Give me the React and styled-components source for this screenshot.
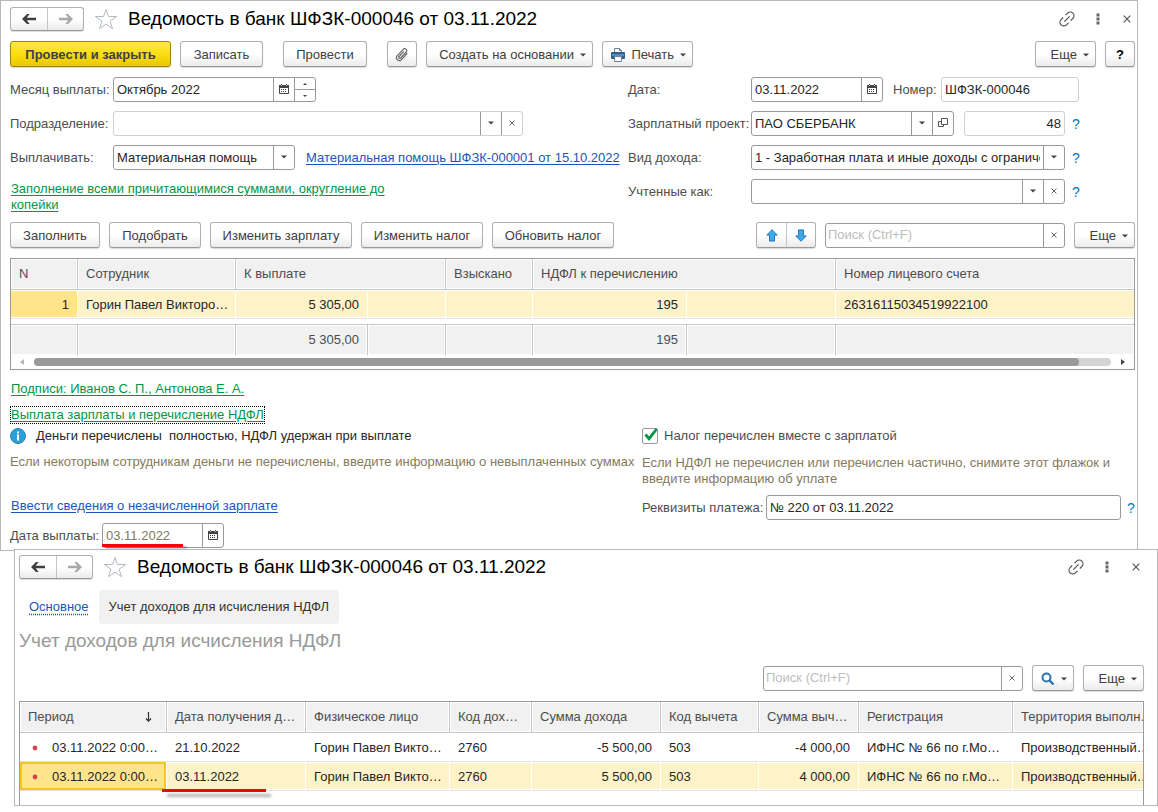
import React, { useState } from "react";
import styled, { createGlobalStyle, css } from "styled-components";

/* ---------- icons ---------- */

const Caret = () => (
  <svg width="6" height="4" viewBox="0 0 6 4" aria-hidden="true">
    <path d="M0 0.5h6L3 3.5z" fill="#444" />
  </svg>
);

const SpinMark = ({ up }) => (
  <svg width="4" height="2" viewBox="0 0 4 2" aria-hidden="true">
    <path d={up ? "M0 2h4L2 0z" : "M0 0h4L2 2z"} fill="#444" />
  </svg>
);

const ArrowIcon = ({ right }) => (
  <svg width="14" height="10" viewBox="0 0 14 10" aria-hidden="true">
    <path
      d="M0 5L5 0h2.6L4.8 3.7H14v2.6H4.8L7.6 10H5z"
      transform={right ? "rotate(180 7 5)" : undefined}
      fill={right ? "#a8a8a8" : "#404040"}
    />
  </svg>
);

const StarIcon = () => (
  <svg width="24" height="22" viewBox="0 0 24 22" aria-hidden="true">
    <path
      d="M12 1.5l2.5 7h8.2l-6.6 4.7 2.4 7.4L12 16.2l-6.5 4.4 2.4-7.4L1.3 8.5h8.2z"
      fill="#fff"
      stroke="#b4bac2"
      strokeWidth="1"
    />
  </svg>
);

const LinkIcon = () => (
  <svg width="20" height="20" viewBox="0 0 24 24" aria-hidden="true">
    <g
      transform="rotate(-45 12 12)"
      fill="none"
      stroke="#555"
      strokeWidth="1.5"
    >
      <path d="M10 16.5H6.5a4.5 4.5 0 0 1 0-9H10" />
      <path d="M14 7.5h3.5a4.5 4.5 0 0 1 0 9H14" />
      <path d="M7.5 12h9" />
    </g>
  </svg>
);

const DotsIcon = () => (
  <svg width="4" height="12" viewBox="0 0 4 12" aria-hidden="true">
    <path d="M0.5 0.5h3v3h-3zM0.5 4.5h3v3h-3zM0.5 8.5h3v3h-3z" fill="#666" />
  </svg>
);

const CrossIcon = ({ size = 8 }) => (
  <svg width={size} height={size} viewBox="0 0 8 8" aria-hidden="true">
    <path d="M0.7 0.7l6.6 6.6M7.3 0.7L0.7 7.3" stroke="#555" strokeWidth="1.2" />
  </svg>
);

const CalendarIcon = () => (
  <svg width="10" height="10" viewBox="0 0 10 10" aria-hidden="true">
    <path d="M0.5 1.5h9v8h-9z" fill="#fff" stroke="#444" />
    <path d="M0 1h10v3H0zM2 0h1v2H2zM7 0h1v2H7z" fill="#444" />
    <path d="M2 1h1v1H2zM7 1h1v1H7z" fill="#ccc" />
    <path
      d="M2 5h1v1H2zM4 5h1v1H4zM6 5h1v1H6zM2 7h1v1H2zM4 7h1v1H4zM6 7h1v1H6z"
      fill="#444"
    />
  </svg>
);

const OpenIcon = () => (
  <svg width="10" height="10" viewBox="0 0 10 10" aria-hidden="true">
    <path d="M3.5 0.5h6v6h-6z" fill="none" stroke="#555" />
    <path d="M3 3.5H0.5v5h5V7" fill="none" stroke="#555" />
  </svg>
);

const ClipIcon = () => (
  <svg width="14" height="16" viewBox="0 0 14 16" aria-hidden="true">
    <path
      d="M12.4 6.2L6.6 12.6a2.9 2.9 0 0 1-4.3-3.9L8.2 2.3a2 2 0 0 1 3 2.7L5.8 11a1.1 1.1 0 0 1-1.7-1.5l4.7-5.2"
      fill="none"
      stroke="#666"
      strokeWidth="1.2"
    />
  </svg>
);

const PrinterIcon = () => (
  <svg width="14" height="14" viewBox="0 0 14 14" aria-hidden="true">
    <path d="M3.5 5V0.5h5l2 2V5" fill="#fff" stroke="#6b8096" />
    <path d="M8.5 0.5v2h2" fill="none" stroke="#6b8096" />
    <rect y="4" width="14" height="7" rx="1" fill="#2c5f8f" />
    <path d="M1 7h12" stroke="#8fb3d1" />
    <path d="M3.5 8.5h7v5h-7z" fill="#fff" stroke="#6b8096" />
  </svg>
);

const MoveIcon = ({ down }) => (
  <svg width="12" height="13" viewBox="0 0 12 13" aria-hidden="true">
    <path
      d="M6 0.7l5.2 5.4H8.5v6h-5v-6H0.8z"
      transform={down ? "rotate(180 6 6.5)" : undefined}
      fill="#3fa9f0"
      stroke="#2479b5"
    />
  </svg>
);

const SearchIcon = () => (
  <svg width="14" height="14" viewBox="0 0 14 14" aria-hidden="true">
    <circle cx="5.5" cy="5.5" r="4" fill="none" stroke="#2a72b0" strokeWidth="2" />
    <path d="M8.5 8.5l4 4" stroke="#2a72b0" strokeWidth="2.4" />
  </svg>
);

const InfoIcon = () => (
  <svg width="16" height="16" viewBox="0 0 16 16" aria-hidden="true">
    <circle cx="8" cy="8" r="7.5" fill="#2d9fd2" stroke="#2287b8" />
    <path d="M7 3.5h2v2H7zM7 6.5h2v6H7z" fill="#fff" />
  </svg>
);

const SortIcon = () => (
  <svg width="7" height="10" viewBox="0 0 7 10" aria-hidden="true">
    <path d="M3.5 0v9M1 6.5l2.5 2.7L6 6.5" fill="none" stroke="#333" strokeWidth="1.2" />
  </svg>
);

const RecordMark = () => (
  <svg width="6" height="6" viewBox="0 0 6 6" aria-hidden="true">
    <circle cx="3" cy="3" r="2.4" fill="#d9434a" />
  </svg>
);

const ScrollMark = ({ right }) => (
  <svg width="4" height="6" viewBox="0 0 4 6" aria-hidden="true">
    <path d={right ? "M0 0v6l4-3z" : "M4 0v6L0 3z"} fill={right ? "#444" : "#b5b5b5"} />
  </svg>
);

/* ---------- shared parts ---------- */

function WindowHeader() {
  return (
    <Header>
      <ButtonGroup $height={24}>
        <GroupButton $width={36} aria-label="Назад">
          <ArrowIcon />
        </GroupButton>
        <GroupButton $width={36} aria-label="Вперед">
          <ArrowIcon right />
        </GroupButton>
      </ButtonGroup>
      <IconButton $width={24} aria-label="В избранное">
        <StarIcon />
      </IconButton>
      <Title>Ведомость в банк ШФЗК-000046 от 03.11.2022</Title>
      <WindowTools>
        <IconButton $width={20} aria-label="Ссылка">
          <LinkIcon />
        </IconButton>
        <IconButton $width={16} aria-label="Меню">
          <DotsIcon />
        </IconButton>
        <IconButton $width={16} aria-label="Закрыть">
          <CrossIcon />
        </IconButton>
      </WindowTools>
    </Header>
  );
}

function Combo({ id, value, width, soft, children }) {
  return (
    <Box $width={width} $soft={soft}>
      <Select id={id} defaultValue={value}>
        <option>{value}</option>
      </Select>
      <Addon tabIndex={-1} aria-label="Выбрать">
        <Caret />
      </Addon>
      {children}
    </Box>
  );
}

function SearchBox({ width, label }) {
  return (
    <Box $width={width}>
      <Input type="text" placeholder="Поиск (Ctrl+F)" aria-label={label} $search />
      <Addon aria-label="Очистить">
        <CrossIcon size={6} />
      </Addon>
    </Box>
  );
}

const MoreButton = () => (
  <Button $width={61} $menu>
    Еще <Caret />
  </Button>
);

/* ---------- document window ---------- */

function PayoutForm() {
  return (
    <FormGrid>
      <FormColumn>
        <Row>
          <Label htmlFor="month" $width={103}>Месяц выплаты:</Label>
          <Box $width={203}>
            <Input id="month" defaultValue="Октябрь 2022" />
            <Addon aria-label="Календарь"><CalendarIcon /></Addon>
            <Spinner>
              <button aria-label="Больше"><SpinMark up /></button>
              <button aria-label="Меньше"><SpinMark /></button>
            </Spinner>
          </Box>
        </Row>
        <Row>
          <Label htmlFor="department" $width={103}>Подразделение:</Label>
          <Combo id="department" value="" width={410} soft>
            <Addon aria-label="Очистить"><CrossIcon size={6} /></Addon>
          </Combo>
        </Row>
        <Row>
          <Label htmlFor="payKind" $width={103}>Выплачивать:</Label>
          <Combo id="payKind" value="Материальная помощь" width={182} />
          <DocLink href="#aid">Материальная помощь ШФЗК-000001 от 15.10.2022</DocLink>
        </Row>
        <FillLink href="#fill">
          Заполнение всеми причитающимися суммами, округление до копейки
        </FillLink>
      </FormColumn>
      <FormColumn>
        <Row>
          <Label htmlFor="date" $width={123}>Дата:</Label>
          <Box $width={132}>
            <Input id="date" defaultValue="03.11.2022" />
            <Addon aria-label="Календарь"><CalendarIcon /></Addon>
          </Box>
          <NumberLabel htmlFor="number">Номер:</NumberLabel>
          <Box $width={138} $soft>
            <Input id="number" defaultValue="ШФЗК-000046" />
          </Box>
        </Row>
        <Row>
          <Label htmlFor="project" $width={123}>Зарплатный проект:</Label>
          <Combo id="project" value="ПАО СБЕРБАНК" width={203}>
            <Addon aria-label="Открыть"><OpenIcon /></Addon>
          </Combo>
          <CodeBox $width={101} $soft>
            <Input aria-label="Номер проекта" defaultValue="48" $right />
          </CodeBox>
          <Help href="#help">?</Help>
        </Row>
        <Row>
          <Label htmlFor="income" $width={123}>Вид дохода:</Label>
          <Combo
            id="income"
            value="1 - Заработная плата и иные доходы с ограничением взыскания"
            width={314}
          />
          <Help href="#help">?</Help>
        </Row>
        <Row>
          <Label htmlFor="accounted" $width={123}>Учтенные как:</Label>
          <Combo id="accounted" value="" width={314}>
            <Addon aria-label="Очистить"><CrossIcon size={6} /></Addon>
          </Combo>
          <Help href="#help">?</Help>
        </Row>
      </FormColumn>
    </FormGrid>
  );
}

const PAYOUT_COLS = [67, 158, 132, 78, 87, 154, 149];

function PayoutTable() {
  return (
    <TableFrame>
      <Table>
        <colgroup>
          {PAYOUT_COLS.map((w, i) => (
            <Col key={i} $width={w} />
          ))}
          <col />
        </colgroup>
        <thead>
          <tr>
            <Th>N</Th>
            <Th>Сотрудник</Th>
            <Th colSpan={2}>К выплате</Th>
            <Th>Взыскано</Th>
            <Th colSpan={2}>НДФЛ к перечислению</Th>
            <Th>Номер лицевого счета</Th>
          </tr>
        </thead>
        <tbody>
          <tr>
            <Td $selected $current $right>1</Td>
            <Td $selected>Горин Павел Викторо…</Td>
            <Td $selected $right>5 305,00</Td>
            <Td $selected />
            <Td $selected />
            <Td $selected $right>195</Td>
            <Td $selected />
            <Td $selected>26316115034519922100</Td>
          </tr>
        </tbody>
        <tfoot>
          <tr>
            <Spacer colSpan={8} />
          </tr>
          <tr>
            <Total />
            <Total />
            <Total>5 305,00</Total>
            <Total />
            <Total />
            <Total>195</Total>
            <Total />
            <Total />
          </tr>
        </tfoot>
      </Table>
      <ScrollBar>
        <ScrollMark />
        <Track>
          <Thumb />
        </Track>
        <ScrollMark right />
      </ScrollBar>
    </TableFrame>
  );
}

function PaymentSection() {
  const [paid, setPaid] = useState(true);

  return (
    <PaymentGrid>
      <div>
        <InfoLine>
          <InfoIcon />
          <span>Деньги перечислены&nbsp; полностью, НДФЛ удержан при выплате</span>
        </InfoLine>
        <Note $left>
          Если некоторым сотрудникам деньги не перечислены, введите информацию о
          невыплаченных суммах
        </Note>
        <EnterLink href="#unpaid">Ввести сведения о незачисленной зарплате</EnterLink>
        <Row>
          <Label htmlFor="payDate" $width={92}>Дата выплаты:</Label>
          <MarkedBox $width={122}>
            <Input id="payDate" defaultValue="03.11.2022" $muted />
            <Addon aria-label="Календарь"><CalendarIcon /></Addon>
          </MarkedBox>
        </Row>
      </div>
      <div>
        <CheckLabel>
          <CheckBox
            type="checkbox"
            checked={paid}
            onChange={(e) => setPaid(e.target.checked)}
          />
          {paid && (
            <CheckMark width="16" height="16" viewBox="0 0 16 16" aria-hidden="true">
              <path d="M3.5 6.5l3.6 4.2L14.6 1" fill="none" stroke="#009646" strokeWidth="2.8" />
            </CheckMark>
          )}
          Налог перечислен вместе с зарплатой
        </CheckLabel>
        <Note>
          Если НДФЛ не перечислен или перечислен частично, снимите этот флажок и
          введите информацию об уплате
        </Note>
        <Row>
          <Label htmlFor="details" $width={124}>Реквизиты платежа:</Label>
          <Box $grow>
            <Input id="details" defaultValue="№ 220 от 03.11.2022" />
          </Box>
          <Help href="#help" $edge>?</Help>
        </Row>
      </div>
    </PaymentGrid>
  );
}

function DocumentWindow() {
  return (
    <MainWindow>
      <WindowHeader />
      <Toolbar>
        <Button $width={161} $primary>Провести и закрыть</Button>
        <Button $width={83}>Записать</Button>
        <Section>
          <Button $width={84}>Провести</Button>
        </Section>
        <Section>
          <Button $width={30} aria-label="Файлы"><ClipIcon /></Button>
        </Section>
        <Button $width={167} $menu>
          Создать на основании <Caret />
        </Button>
        <Button $width={91} $menu>
          <PrinterIcon /> Печать <Caret />
        </Button>
        <Push />
        <MoreButton />
        <HelpButton $width={30}>?</HelpButton>
      </Toolbar>
      <PayoutForm />
      <Toolbar>
        <Button $width={90}>Заполнить</Button>
        <Button $width={92}>Подобрать</Button>
        <Button $width={142}>Изменить зарплату</Button>
        <Button $width={122}>Изменить налог</Button>
        <Button $width={122}>Обновить налог</Button>
        <Push />
        <ButtonGroup $height={26}>
          <GroupButton $width={29} aria-label="Вверх"><MoveIcon /></GroupButton>
          <GroupButton $width={29} aria-label="Вниз"><MoveIcon down /></GroupButton>
        </ButtonGroup>
        <SearchBox width={240} label="Поиск сотрудника" />
        <MoreButton />
      </Toolbar>
      <PayoutTable />
      <SignLine>
        <GreenLink href="#signs">Подписи: Иванов С. П., Антонова Е. А.</GreenLink>
      </SignLine>
      <FocusLine>
        <FocusLink href="#payment">Выплата зарплаты и перечисление НДФЛ</FocusLink>
      </FocusLine>
      <PaymentSection />
    </MainWindow>
  );
}

/* ---------- register window ---------- */

const INCOME_COLS = [147, 139, 144, 82, 129, 98, 100, 154];

const INCOME_ROWS = [
  { date: "21.10.2022", sum: "-5 500,00", deduction: "-4 000,00" },
  { date: "03.11.2022", sum: "5 500,00", deduction: "4 000,00", selected: true },
];

function IncomeTable() {
  return (
    <IncomeFrame>
      <Table>
        <colgroup>
          {INCOME_COLS.map((w, i) => (
            <Col key={i} $width={w} />
          ))}
          <col />
        </colgroup>
        <thead>
          <tr>
            <Th>
              <SortHead>
                Период <SortIcon />
              </SortHead>
            </Th>
            <Th>Дата получения д…</Th>
            <Th>Физическое лицо</Th>
            <Th>Код дох…</Th>
            <Th>Сумма дохода</Th>
            <Th>Код вычета</Th>
            <Th>Сумма выч…</Th>
            <Th>Регистрация</Th>
            <Th $last>Территория выполн…</Th>
          </tr>
        </thead>
        <tbody>
          {INCOME_ROWS.map((row) => (
            <tr key={row.date}>
              <Td $selected={row.selected} $current={row.selected} $framed={row.selected}>
                <Period>
                  <RecordMark />
                  03.11.2022 0:00…
                </Period>
              </Td>
              <Td $selected={row.selected} $marked={row.selected}>{row.date}</Td>
              <Td $selected={row.selected}>Горин Павел Викто…</Td>
              <Td $selected={row.selected}>2760</Td>
              <Td $selected={row.selected} $right>{row.sum}</Td>
              <Td $selected={row.selected}>503</Td>
              <Td $selected={row.selected} $right>{row.deduction}</Td>
              <Td $selected={row.selected}>ИФНС № 66 по г.Мо…</Td>
              <Td $selected={row.selected} $last>Производственный…</Td>
            </tr>
          ))}
        </tbody>
      </Table>
    </IncomeFrame>
  );
}

function RegisterWindow() {
  return (
    <SideWindow>
      <WindowHeader />
      <Tabs>
        <TabLink href="#main">Основное</TabLink>
        <ActiveTab>Учет доходов для исчисления НДФЛ</ActiveTab>
      </Tabs>
      <Subtitle>Учет доходов для исчисления НДФЛ</Subtitle>
      <Toolbar>
        <Push />
        <SearchBox width={260} label="Поиск записи" />
        <Button $width={42} $menu aria-label="Найти">
          <SearchIcon /> <Caret />
        </Button>
        <MoreButton />
      </Toolbar>
      <IncomeTable />
    </SideWindow>
  );
}

function App() {
  return (
    <>
      <GlobalStyle />
      <DocumentWindow />
      <RegisterWindow />
    </>
  );
}

export default App;

/* ---------- styles ---------- */

const GlobalStyle = createGlobalStyle`
  * {
    box-sizing: border-box;
  }
  body {
    margin: 0;
    background: #fff;
    color: #333;
    font: 13px/16px "Liberation Sans", Arial, sans-serif;
  }
  button, input, select {
    font: inherit;
    color: inherit;
    margin: 0;
  }
  svg {
    display: block;
    flex: none;
  }
`;

const MainWindow = styled.main`
  margin-right: 20px;
  padding: 6px 2px 2px 9px;
  border: 1px solid #b8b8b8;
`;

const SideWindow = styled.section`
  position: relative;
  margin: -2px 0 0 14px;
  padding: 5px 13px 0 4px;
  border: 1px solid #b8b8b8;
  background: #fff;
`;

const Header = styled.header`
  display: flex;
  align-items: center;
  height: 24px;
  gap: 10px;
`;

const Title = styled.h1`
  flex: 1;
  margin: 0;
  font-size: 19px;
  line-height: 24px;
  font-weight: normal;
  color: #000;
  white-space: nowrap;
`;

const WindowTools = styled.div`
  display: flex;
  align-items: center;
  gap: 13px;
`;

const IconButton = styled.button`
  display: flex;
  align-items: center;
  justify-content: center;
  width: ${(p) => p.$width}px;
  height: 24px;
  padding: 0;
  border: 0;
  background: none;
  cursor: pointer;
`;

const raised = css`
  border: 1px solid #b0b0b0;
  border-bottom-color: #999;
  border-radius: 3px;
  background: linear-gradient(#fff 50%, #ebebeb);
  box-shadow: 0 1px 1px rgba(0, 0, 0, 0.15);
`;

const ButtonGroup = styled.div`
  display: flex;
  flex: none;
  height: ${(p) => p.$height}px;
  ${raised}
`;

const GroupButton = styled.button`
  display: flex;
  flex: none;
  align-items: center;
  justify-content: center;
  width: ${(p) => p.$width}px;
  padding: 0;
  border: 0;
  background: none;

  &:last-child {
    border-left: 1px solid #c4c4c4;
  }
`;

const Toolbar = styled.div`
  display: flex;
  align-items: center;
  gap: 9px;
  margin: 10px 0;
`;

const Section = styled.div`
  margin-left: 11px;
`;

const Push = styled.div`
  flex: 1;
`;

const Button = styled.button`
  display: flex;
  align-items: center;
  justify-content: ${(p) => (p.$menu ? "flex-end" : "center")};
  gap: 6px;
  width: ${(p) => p.$width}px;
  height: 26px;
  padding: 1px ${(p) => (p.$menu ? 6 : 0)}px 0 0;
  color: #404040;
  white-space: nowrap;
  ${raised}
  ${(p) =>
    p.$primary &&
    css`
      border-color: #9c8600;
      background: linear-gradient(#ffe84a, #fade10 50%, #e8c800);
      font-weight: bold;
    `}
`;

const HelpButton = styled(Button)`
  color: #000;
  font-weight: bold;
`;

const FormGrid = styled.div`
  display: grid;
  grid-template-columns: 618fr 507fr;
  margin-bottom: -1px;
`;

const FormColumn = styled.div`
  display: flex;
  flex-direction: column;
  gap: 9px;
`;

const Row = styled.div`
  display: flex;
  align-items: center;
`;

const Label = styled.label`
  flex: none;
  width: ${(p) => p.$width}px;
  color: #4d4d4d;
  white-space: nowrap;
`;

const NumberLabel = styled(Label)`
  width: 48px;
  margin-left: 10px;
`;

const Box = styled.div`
  display: flex;
  flex: ${(p) => (p.$grow ? "1" : "none")};
  width: ${(p) => p.$width}px;
  height: 25px;
  border: 1px solid ${(p) => (p.$soft ? "#d0d0d0" : "#999")};
  border-radius: 3px;
  background: #fff;
`;

const CodeBox = styled(Box)`
  margin-left: 10px;
`;

const Input = styled.input`
  flex: 1;
  min-width: 0;
  padding: 0 3px 0 ${(p) => (p.$search ? 2 : 3)}px;
  border: 0;
  outline: 0;
  background: none;
  color: ${(p) => (p.$muted ? "#857a5c" : "#262626")};
  text-align: ${(p) => (p.$right ? "right" : "left")};

  &::placeholder {
    color: #bdbdbd;
  }
`;

const Select = styled.select`
  appearance: none;
  flex: 1;
  min-width: 0;
  padding: 0 3px;
  border: 0;
  outline: 0;
  background: none;
  color: #262626;
`;

const Addon = styled.button`
  display: flex;
  flex: none;
  align-items: center;
  justify-content: center;
  width: 21px;
  padding: 0 1px 1px 0;
  border: 0;
  border-left: 1px solid #999;
  background: none;
`;

const Spinner = styled.div`
  display: flex;
  flex-direction: column;
  width: 21px;
  border-left: 1px solid #999;

  button {
    display: flex;
    flex: 1;
    align-items: center;
    justify-content: center;
    padding: 0;
    border: 0;
    background: none;
  }
  button + button {
    border-top: 1px solid #999;
  }
`;

/* red pen line under a value */
const penLine = css`
  content: "";
  position: absolute;
  height: 3px;
  background: #f00;
`;

const MarkedBox = styled(Box)`
  position: relative;

  &::after {
    ${penLine}
    left: -1px;
    bottom: 0;
    width: 81px;
    box-shadow: 4px 2px 2px rgba(0, 0, 0, 0.25);
  }
`;

const BlueLink = styled.a`
  color: #1c55ba;
  text-underline-offset: 2px;
`;

const GreenLink = styled.a`
  color: #009646;
  text-underline-offset: 2px;
`;

const DocLink = styled(BlueLink)`
  margin-left: 11px;
  white-space: nowrap;
`;

const FillLink = styled(GreenLink)`
  max-width: 400px;
  padding: 2px 0 0 1px;
`;

const Help = styled.a`
  width: 8px;
  margin-left: ${(p) => (p.$edge ? 6 : 7)}px;
  color: #0078be;
  font-size: 14px;
  text-decoration: none;
`;

const TableFrame = styled.div`
  border: 1px solid #999;
  overflow: hidden;
`;

const IncomeFrame = styled.div`
  padding-bottom: 14px;
  border: 1px solid #999;
  border-bottom: 0;
  overflow: hidden;
`;

const Table = styled.table`
  width: 100%;
  table-layout: fixed;
  border-collapse: separate;
  border-spacing: 0;
`;

const Col = styled.col`
  width: ${(p) => p.$width}px;
`;

const Th = styled.th`
  height: 31px;
  padding: 0 ${(p) => (p.$last ? 0 : 4)}px 0 8px;
  border-right: 1px solid #c6c6c6;
  border-bottom: 1px solid #c6c6c6;
  background: #f1f1f1;
  box-shadow: inset 0 0 0 1px #fff;
  color: #4d4d4d;
  font-weight: normal;
  text-align: left;
  white-space: nowrap;
  overflow: hidden;

  &:last-child {
    border-right: 0;
  }
`;

const Td = styled.td`
  height: 29px;
  padding: 1px ${(p) => (p.$last ? 0 : p.$right ? 8 : 4)}px 0 8px;
  border-right: 1px solid #fff;
  border-bottom: 1px solid #e4e4e4;
  color: #262626;
  text-align: ${(p) => (p.$right ? "right" : "left")};
  white-space: nowrap;
  overflow: hidden;

  &:last-child {
    border-right: 0;
  }
  ${(p) =>
    p.$selected &&
    css`
      background: ${p.$current ? "#ffe48c" : "#fef2c8"};
      box-shadow: inset 0 1px #fff, inset 0 -1px #fff;
    `}
  ${(p) =>
    p.$framed &&
    css`
      box-shadow: inset 0 0 0 2px #f5c623;
    `}
  ${(p) =>
    p.$marked &&
    css`
      position: relative;
      overflow: visible;

      &::after {
        ${penLine}
        left: -5px;
        bottom: -2px;
        width: 104px;
        box-shadow: 5px 5px 3px rgba(0, 0, 0, 0.3);
      }
    `}
`;

const Spacer = styled.td`
  height: 5px;
  padding: 0;
`;

const Total = styled.td`
  height: 31px;
  padding: 0 8px;
  border-top: 1px solid #c6c6c6;
  border-right: 1px solid #c6c6c6;
  background: #f1f1f1;
  box-shadow: inset 0 0 0 1px #fff;
  color: #4d4d4d;
  text-align: right;

  &:last-child {
    border-right: 0;
  }
`;

const ScrollBar = styled.div`
  display: flex;
  align-items: center;
  justify-content: space-between;
  height: 14px;
  padding: 0 9px;
`;

const Track = styled.div`
  flex: 1;
  height: 8px;
  margin: 0 10px;
  border-radius: 4px;
  background: #d4d4d4;
`;

const Thumb = styled.div`
  width: 97%;
  height: 8px;
  border-radius: 4px;
  background: #999;
`;

const SignLine = styled.div`
  padding: 11px 0 9px 1px;
`;

const FocusLine = styled.div`
  display: flex;
`;

const FocusLink = styled(GreenLink)`
  border: 1px dotted #000;
`;

const PaymentGrid = styled.div`
  display: grid;
  grid-template-columns: 632fr 493fr;
  padding-top: 4px;
`;

const InfoLine = styled.div`
  display: flex;
  gap: 10px;
  color: #262626;
`;

const Note = styled.p`
  margin: ${(p) => (p.$left ? "10px 0 28px" : "11px 20px 8px 0")};
  color: #857a5c;
`;

const EnterLink = styled(BlueLink)`
  display: block;
  margin: 0 0 9px 1px;
`;

const CheckLabel = styled.label`
  position: relative;
  display: flex;
  align-items: center;
  gap: 6px;
  color: #4d4d4d;
`;

const CheckBox = styled.input`
  appearance: none;
  width: 16px;
  height: 16px;
  border: 1px solid #999;
  border-radius: 2px;
  background: #fff;
`;

const CheckMark = styled.svg`
  position: absolute;
  top: 0;
  left: 0;
  pointer-events: none;
`;

const Tabs = styled.nav`
  display: flex;
  align-items: center;
  gap: 10px;
  margin-top: 11px;
  padding-left: 10px;
`;

const TabLink = styled(BlueLink)`
  text-decoration: underline dotted;
  text-underline-offset: 3px;
`;

const ActiveTab = styled.span`
  padding: 9px 10px;
  border-radius: 4px;
  background: #f1f1f1;
  color: #333;
`;

const Subtitle = styled.h2`
  margin: 5px 0 12px;
  font-size: 19px;
  line-height: 24px;
  font-weight: normal;
  color: #999;
`;

const SortHead = styled.span`
  display: flex;
  align-items: center;
  justify-content: space-between;
  padding-right: 10px;
`;

const Period = styled.span`
  display: flex;
  align-items: center;
  gap: 14px;
  padding-left: 4px;
`;
